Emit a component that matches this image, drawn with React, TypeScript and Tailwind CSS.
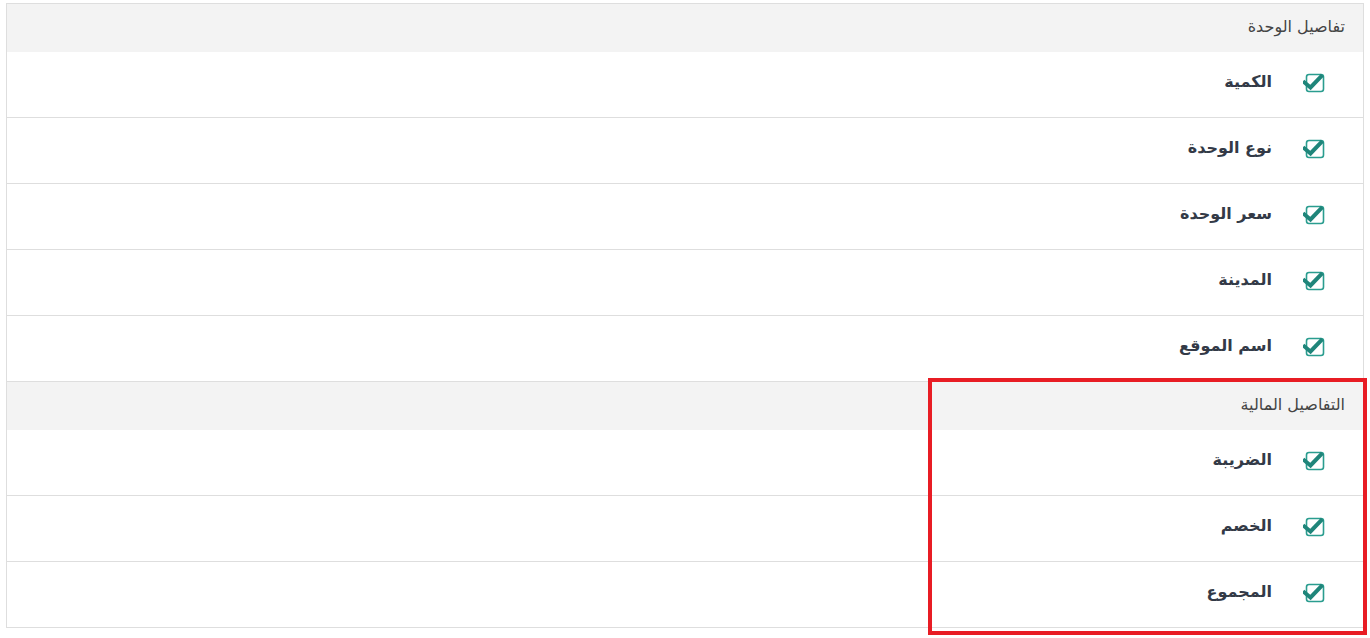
import React from "react";

const Check = () => (
  <svg width="22" height="22" viewBox="0 0 22 22" className="shrink-0">
    <rect x="3.5" y="3.5" width="17" height="17" rx="2.5" fill="none" stroke="#2a9d8f" strokeWidth="1.6" />
    <path d="M1.5 11.5 L7.5 16.5 L18 5.5" fill="none" stroke="#1f857a" strokeWidth="4" strokeLinecap="square" strokeLinejoin="miter" />
  </svg>
);

const Row = ({ label }: { label: string }) => (
  <div className="h-[66px] border-b border-[#dedede] flex items-center pr-[38px] pb-[5px] gap-[31px]">
    <Check />
    <span className="text-[16px] font-bold text-[#333a47]" style={{ fontFamily: '"DejaVu Sans", "Noto Sans", sans-serif' }}>{label}</span>
  </div>
);

const Header = ({ label }: { label: string }) => (
  <div className="h-[48px] bg-[#f3f3f3] flex items-center pr-[18px] pb-[2px]">
    <span className="text-[16px] text-[#444]" style={{ fontFamily: '"DejaVu Sans", "Noto Sans", sans-serif' }}>{label}</span>
  </div>
);

export default function App() {
  return (
    <div className="relative w-[1370px] h-[638px] bg-white overflow-hidden" style={{ fontFamily: '"DejaVu Sans", "Noto Sans", sans-serif' }}>
      <div dir="rtl" className="ml-[6px] mt-[3px] w-[1358px] border-t border-l border-r border-[#dedede]">
        <Header label="تفاصيل الوحدة" />
        <Row label="الكمية" />
        <Row label="نوع الوحدة" />
        <Row label="سعر الوحدة" />
        <Row label="المدينة" />
        <Row label="اسم الموقع" />
        <Header label="التفاصيل المالية" />
        <Row label="الضريبة" />
        <Row label="الخصم" />
        <Row label="المجموع" />
      </div>
      <div className="absolute left-[928px] top-[378px] w-[439px] h-[257px] border-[4px] border-[#e81c24]" />
    </div>
  );
}
